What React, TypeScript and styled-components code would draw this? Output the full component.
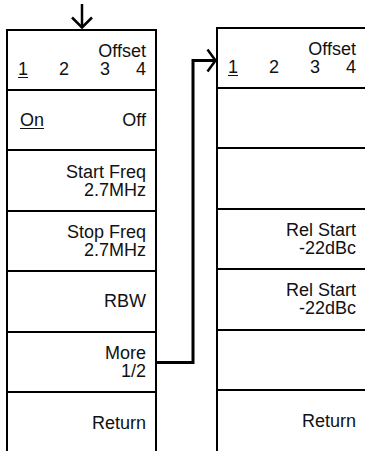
import React from 'react';
import styled, { createGlobalStyle } from 'styled-components';

const GlobalStyle = createGlobalStyle`
  html, body {
    margin: 0;
    padding: 0;
    background: #ffffff;
  }
  body {
    font-family: "Liberation Sans", Arial, sans-serif;
    color: #111;
  }
`;

interface MenuItem {
  lines?: string[];
  onOff?: boolean;
}

const PAGE_ONE: MenuItem[] = [
  { onOff: true },
  { lines: ['Start Freq', '2.7MHz'] },
  { lines: ['Stop Freq', '2.7MHz'] },
  { lines: ['RBW'] },
  { lines: ['More', '1/2'] },
  { lines: ['Return'] },
];

const PAGE_TWO: MenuItem[] = [
  {},
  {},
  { lines: ['Rel Start', '-22dBc'] },
  { lines: ['Rel Start', '-22dBc'] },
  {},
  { lines: ['Return'] },
];

const DIGIT_GAPS = [0, 31, 31, 26];

const SoftMenu: React.FC<{ items: MenuItem[] }> = ({ items }) => (
  <Panel>
    <Header>
      <Title>Offset</Title>
      <Digits>
        {['1', '2', '3', '4'].map((d, i) => (
          <Digit key={d} $gap={DIGIT_GAPS[i]} $active={i === 0}>
            {d}
          </Digit>
        ))}
      </Digits>
    </Header>
    {items.map((item, i) => (
      <Row key={i} $last={i === items.length - 1} $split={!!item.onOff}>
        {item.onOff ? (
          <>
            <Underlined>On</Underlined>
            <span>Off</span>
          </>
        ) : (
          item.lines?.map((l) => <Line key={l}>{l}</Line>)
        )}
      </Row>
    ))}
  </Panel>
);

export default function App() {
  return (
    <>
      <GlobalStyle />
      <Page>
        <Column>
          <TopArrow>
            <svg width="151" height="29" viewBox="0 0 151 29">
              <g stroke="#000" strokeWidth="2.5" fill="none">
                <line x1="76" y1="4" x2="76" y2="28" />
                <polyline points="66,17.5 76,27.5 86,17.5" />
              </g>
            </svg>
          </TopArrow>
          <SoftMenu items={PAGE_ONE} />
        </Column>
        <Connector>
          <svg width="59" height="451" viewBox="0 0 59 451">
            <g stroke="#000" strokeWidth="3" fill="none">
              <polyline points="0,362.5 36,362.5 36,60.5 58,60.5" />
              <polyline points="50.5,49.5 58.5,60.5 50.5,71.5" strokeWidth="2.5" />
            </g>
          </svg>
        </Connector>
        <Column>
          <TopSpace />
          <SoftMenu items={PAGE_TWO} />
        </Column>
      </Page>
    </>
  );
}

const Page = styled.div`
  display: flex;
  padding-left: 6px;
  height: 451px;
  overflow: hidden;
`;

const Column = styled.div`
  width: 151px;
  flex-shrink: 0;
  display: flex;
  flex-direction: column;
`;

const TopArrow = styled.div`
  height: 29px;
  svg {
    display: block;
  }
`;

const TopSpace = styled.div`
  height: 29px;
`;

const Connector = styled.div`
  width: 59px;
  flex-shrink: 0;
  svg {
    display: block;
  }
`;

const Panel = styled.div`
  box-sizing: border-box;
  width: 151px;
  border: 2px solid #000;
  border-bottom: none;
  font-size: 18px;
  line-height: 18px;
`;

const Header = styled.div`
  box-sizing: border-box;
  height: 60px;
  border-bottom: 2px solid #000;
  display: flex;
  flex-direction: column;
  justify-content: center;
  padding: 0 9px 0 10px;
`;

const Title = styled.div`
  text-align: right;
  height: 18px;
`;

const Digits = styled.div`
  display: flex;
  height: 18px;
`;

const Digit = styled.span<{ $gap: number; $active: boolean }>`
  width: 10px;
  margin-left: ${(p) => p.$gap}px;
  text-decoration: ${(p) => (p.$active ? 'underline' : 'none')};
  text-underline-offset: 2px;
`;

const Row = styled.div<{ $last: boolean; $split: boolean }>`
  box-sizing: border-box;
  height: ${(p) => (p.$last ? '60px' : '60.4px')};
  border-bottom: ${(p) => (p.$last ? 'none' : '2px solid #000')};
  display: flex;
  flex-direction: ${(p) => (p.$split ? 'row' : 'column')};
  justify-content: ${(p) => (p.$split ? 'space-between' : 'center')};
  align-items: ${(p) => (p.$split ? 'center' : 'flex-end')};
  padding: 0 9px 0 12px;
  text-align: right;
`;

const Line = styled.span`
  display: block;
  height: 18px;
`;

const Underlined = styled.span`
  text-decoration: underline;
  text-underline-offset: 2px;
`;
